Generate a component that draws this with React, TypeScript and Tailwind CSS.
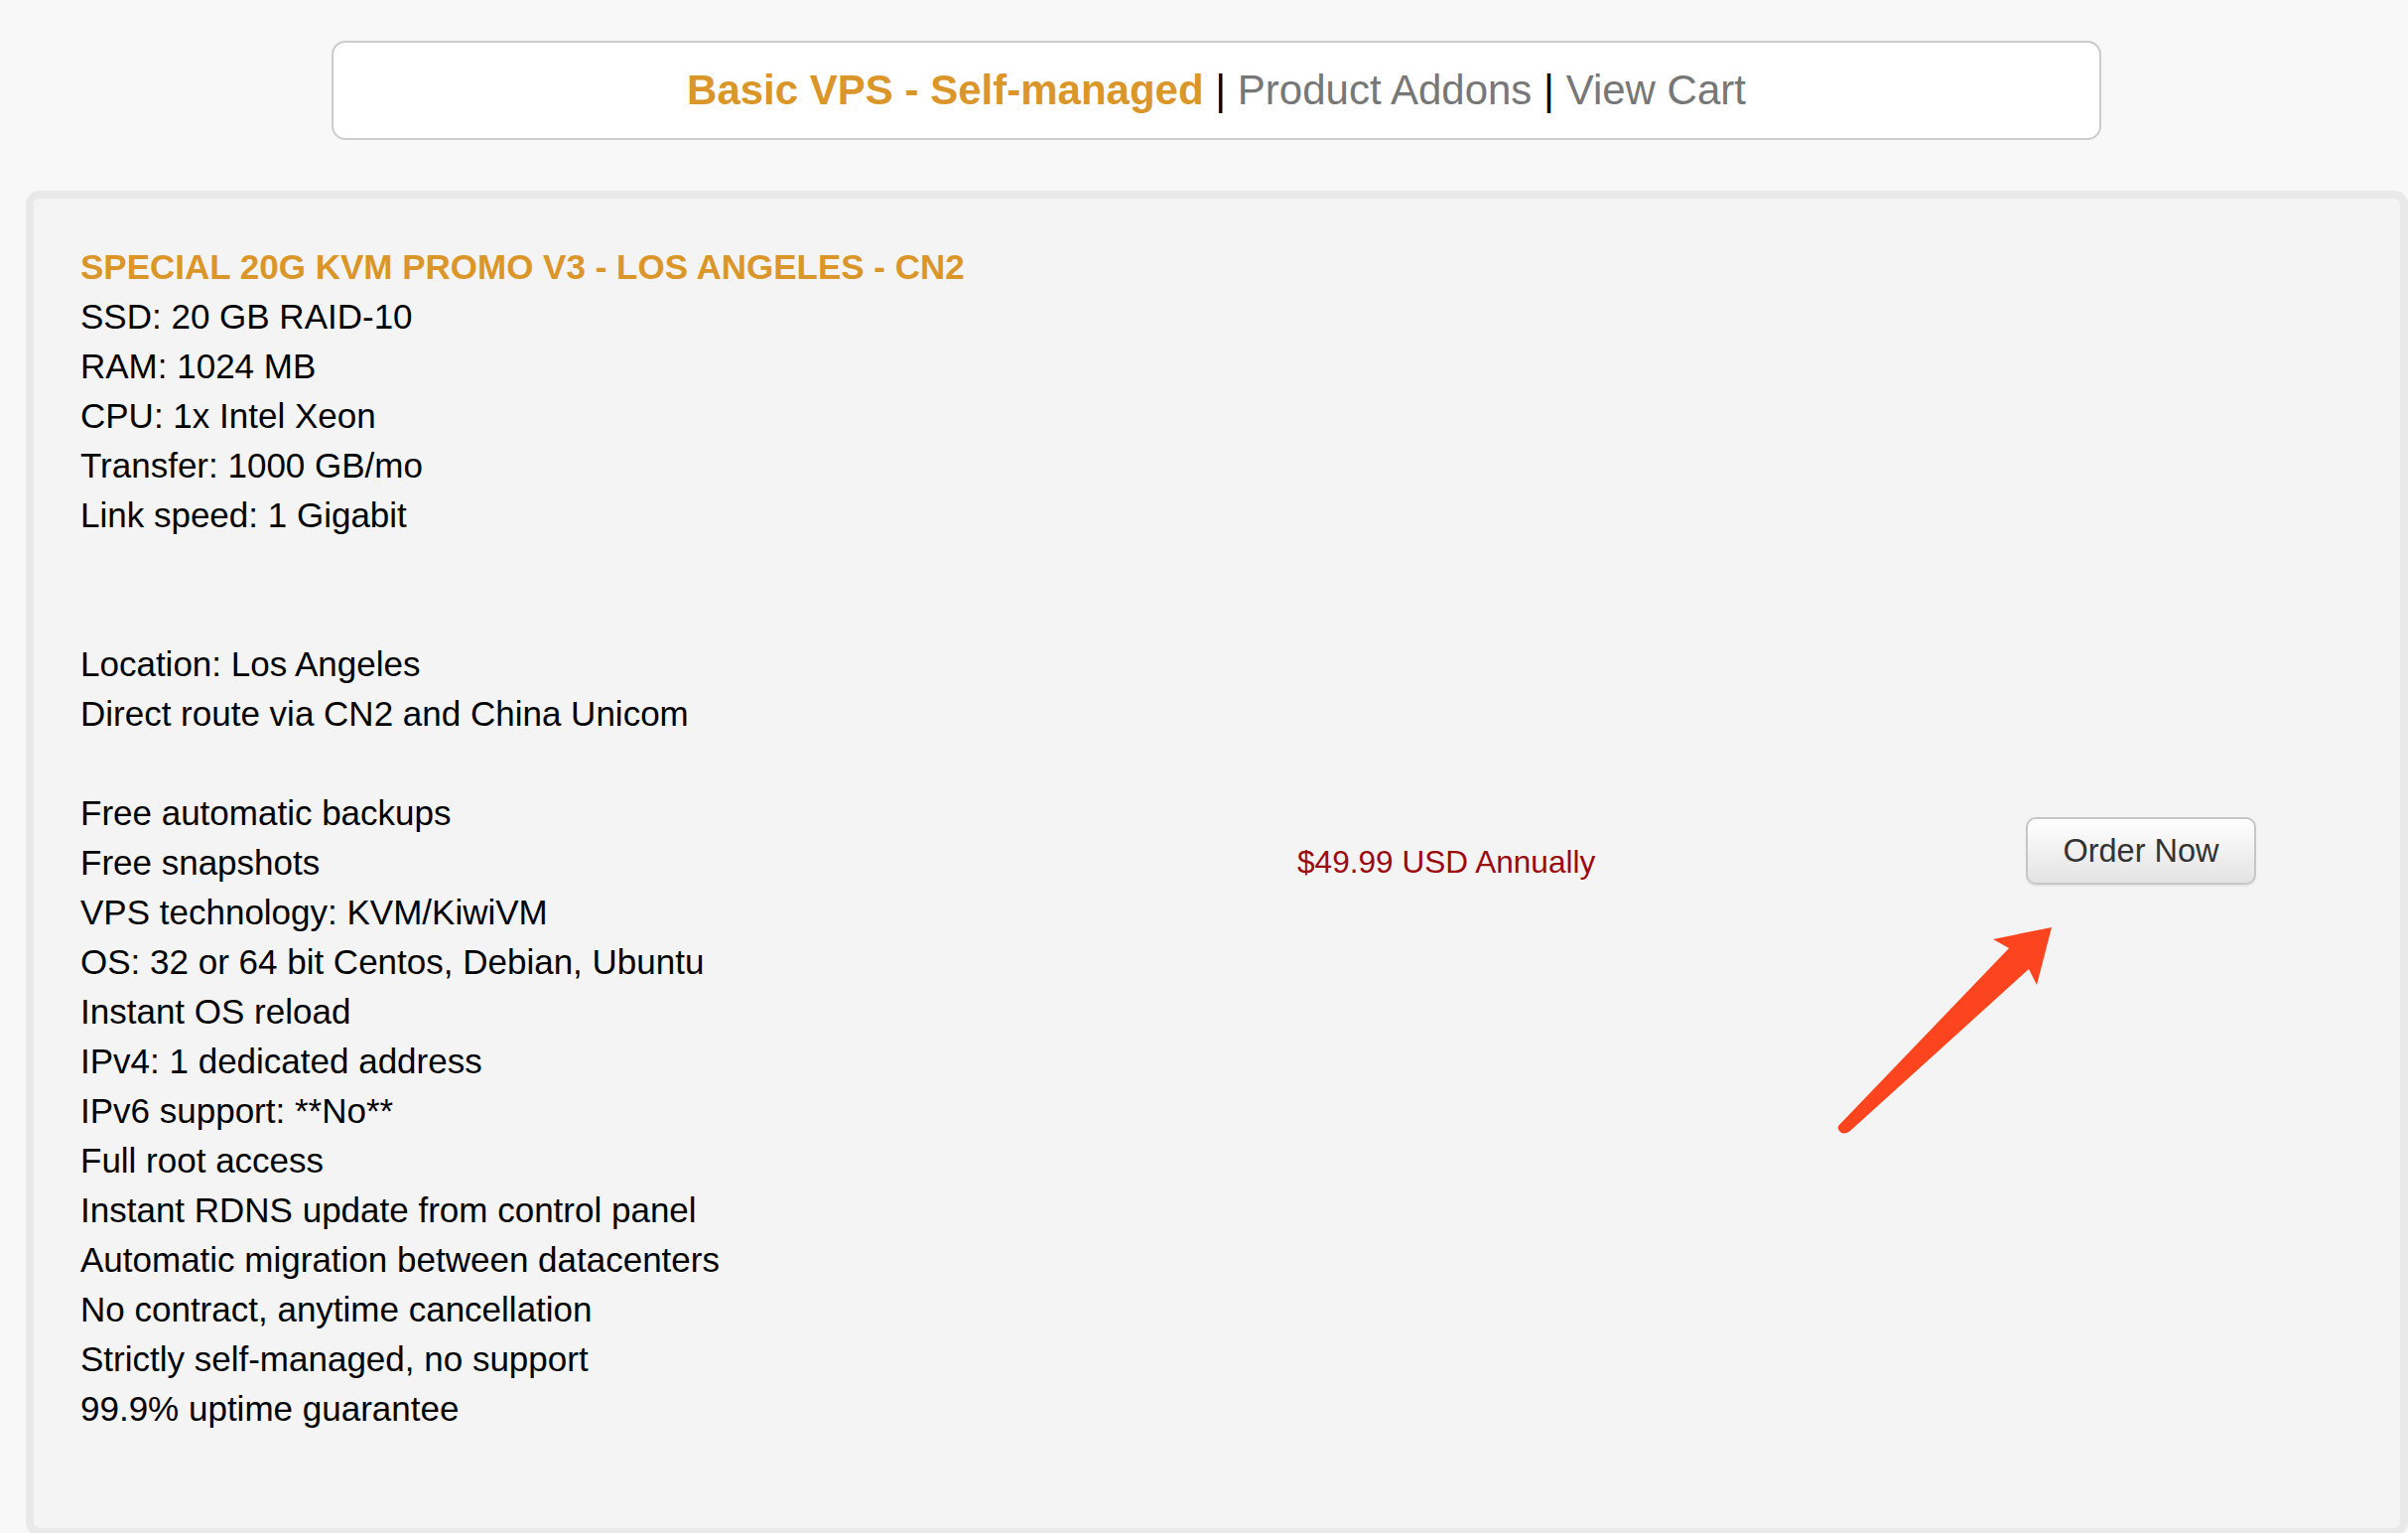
import React from 'react';

const specs = [
  'SSD: 20 GB RAID-10',
  'RAM: 1024 MB',
  'CPU: 1x Intel Xeon',
  'Transfer: 1000 GB/mo',
  'Link speed: 1 Gigabit',
  '',
  '',
  'Location: Los Angeles',
  'Direct route via CN2 and China Unicom',
  '',
  'Free automatic backups',
  'Free snapshots',
  'VPS technology: KVM/KiwiVM',
  'OS: 32 or 64 bit Centos, Debian, Ubuntu',
  'Instant OS reload',
  'IPv4: 1 dedicated address',
  'IPv6 support: **No**',
  'Full root access',
  'Instant RDNS update from control panel',
  'Automatic migration between datacenters',
  'No contract, anytime cancellation',
  'Strictly self-managed, no support',
  '99.9% uptime guarantee',
];

function Arrow() {
  return (
    <svg
      className="absolute left-[1840px] top-[920px] pointer-events-none"
      width={240}
      height={230}
      viewBox="1840 920 240 230"
    >
      <path
        d="M2067 934 L2052 992 L2044 976 L1864 1139 Q1857 1144 1853 1139 Q1850 1135 1854 1132 L2024 955 L2008 946 Z"
        fill="#fc451e"
      />
    </svg>
  );
}

export default function App() {
  return (
    <div className="relative min-h-[1544px] bg-[#f8f8f8] pt-[41px] font-['Liberation_Sans',Arial,sans-serif] overflow-hidden">
      {/* breadcrumb */}
      <div className="ml-[334px] w-[1783px] h-[100px] bg-white border-2 border-[#cccccc] rounded-[14px] flex items-center justify-center text-[42px] leading-none">
        <span className="font-bold text-[#db9629]">Basic VPS - Self-managed</span>
        <span className="text-black whitespace-pre"> | </span>
        <span className="text-[#777777]">Product Addons</span>
        <span className="text-black whitespace-pre"> | </span>
        <span className="text-[#777777]">View Cart</span>
      </div>

      {/* product panel */}
      <div className="mt-[51px] ml-[26px] w-[2400px] border-[8px] border-[#e9e9e9] rounded-[14px] bg-[#f4f4f4] pl-[47px] pt-[44px] pb-[95px] flex">
        <div className="w-[1226px] text-[35px] leading-[50px] text-black">
          <div className="font-bold text-[#db9629]">SPECIAL 20G KVM PROMO V3 - LOS ANGELES - CN2</div>
          {specs.map((line, i) => (
            <div key={i} className="h-[50px]">
              {line}
            </div>
          ))}
        </div>
        <div className="w-[734px] pt-[606px]">
          <span className="text-[31.6px] leading-[36px] text-[#9a0a0f]">$49.99 USD Annually</span>
        </div>
        <div className="pt-[579px]">
          <button className="w-[232px] h-[68px] border-2 border-[#c6c6c6] rounded-[10px] bg-linear-to-b from-white to-[#e3e3e3] text-[32.5px] text-[#333333] shadow-[0_2px_2px_rgba(0,0,0,0.06)]">
            Order Now
          </button>
        </div>
      </div>

      <Arrow />
    </div>
  );
}
